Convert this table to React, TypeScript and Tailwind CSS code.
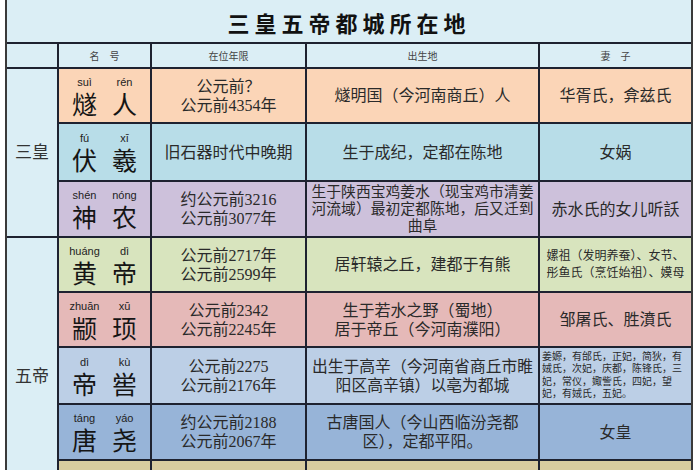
import React from 'react';

type Row = {
  bg: string;
  name: [string, string][];
  dates: string[];
  birth: string[];
  birthSize: string;
  wife: string[];
  wifeSize: string;
  wifeAlign?: string;
};

const rows: Row[] = [
  {
    bg: 'bg-[#fbd5b7]',
    name: [['suì', '燧'], ['rén', '人']],
    dates: ['公元前？', '公元前4354年'],
    birth: ['燧明国（今河南商丘）人'],
    birthSize: 'text-[16px] leading-[19px]',
    wife: ['华胥氏，弇兹氏'],
    wifeSize: 'text-[16px] leading-[19px]',
  },
  {
    bg: 'bg-[#b8dde8]',
    name: [['fú', '伏'], ['xī', '羲']],
    dates: ['旧石器时代中晚期'],
    birth: ['生于成纪，定都在陈地'],
    birthSize: 'text-[16px] leading-[19px]',
    wife: ['女娲'],
    wifeSize: 'text-[16px] leading-[19px]',
  },
  {
    bg: 'bg-[#cdc1db]',
    name: [['shén', '神'], ['nóng', '农']],
    dates: ['约公元前3216', '公元前3077年'],
    birth: ['生于陕西宝鸡姜水（现宝鸡市清姜', '河流域）最初定都陈地，后又迁到', '曲阜'],
    birthSize: 'text-[14.8px] leading-[17px]',
    wife: ['赤水氏的女儿听訞'],
    wifeSize: 'text-[16px] leading-[19px]',
  },
  {
    bg: 'bg-[#d8e4be]',
    name: [['huáng', '黄'], ['dì', '帝']],
    dates: ['公元前2717年', '公元前2599年'],
    birth: ['居轩辕之丘，建都于有熊'],
    birthSize: 'text-[16px] leading-[19px]',
    wife: ['嫘祖（发明养蚕）、女节、', '彤鱼氏（烹饪始祖）、嫫母'],
    wifeSize: 'text-[12px] leading-[17px]',
  },
  {
    bg: 'bg-[#e5b9b8]',
    name: [['zhuān', '颛'], ['xū', '顼']],
    dates: ['公元前2342', '公元前2245年'],
    birth: ['生于若水之野（蜀地）', '居于帝丘（今河南濮阳）'],
    birthSize: 'text-[16px] leading-[19px]',
    wife: ['邹屠氏、胜濆氏'],
    wifeSize: 'text-[16px] leading-[19px]',
  },
  {
    bg: 'bg-[#bccfe6]',
    name: [['dì', '帝'], ['kù', '喾']],
    dates: ['公元前2275', '公元前2176年'],
    birth: ['出生于高辛（今河南省商丘市睢', '阳区高辛镇）以亳为都城'],
    birthSize: 'text-[15.8px] leading-[19px]',
    wife: ['姜嫄，有邰氏，正妃，简狄，有', '娀氏，次妃，庆都，陈锋氏，三', '妃，常仪，娵訾氏，四妃，望', '妃，有娀氏，五妃。'],
    wifeSize: 'text-[10px] leading-[12.5px]',
    wifeAlign: 'text-left pl-[2px]',
  },
  {
    bg: 'bg-[#97b4d8]',
    name: [['táng', '唐'], ['yáo', '尧']],
    dates: ['约公元前2188', '公元前2067年'],
    birth: ['古唐国人（今山西临汾尧都', '区），定都平阳。'],
    birthSize: 'text-[16px] leading-[19px]',
    wife: ['女皇'],
    wifeSize: 'text-[16px] leading-[19px]',
  },
  {
    bg: 'bg-[#d8cc9f]',
    name: [['yú', '虞'], ['shùn', '舜']],
    dates: ['公元前2277', '公元前2178年'],
    birth: ['生于姚墟'],
    birthSize: 'text-[16px] leading-[19px]',
    wife: ['娥皇、女英'],
    wifeSize: 'text-[16px] leading-[19px]',
  },
];

const cellText = 'text-[#2a2a2a] [font-family:"Liberation_Serif","Noto_Sans_CJK_SC",serif]';

function NameCell({ name, bg }: { name: [string, string][]; bg: string }) {
  return (
    <div className={`${bg} flex justify-center items-center`}>
      {name.map(([py, ch]) => (
        <div key={ch} className="w-[40px] flex flex-col items-center">
          <span className="text-[11px] leading-[13px] text-[#222] [font-family:'Liberation_Sans',sans-serif]">
            {py}
          </span>
          <span className="mt-[1px] text-[25px] leading-[26px] text-[#151515] [font-family:'Noto_Sans_CJK_SC',sans-serif]">
            {ch}
          </span>
        </div>
      ))}
    </div>
  );
}

export default function App() {
  return (
    <div className="w-[700px] h-[470px] overflow-hidden bg-white pl-[5px]">
      <div className="w-[688px] grid grid-cols-[50px_91px_153px_231px_151px] grid-rows-[42px_23px_53px_56px_54px_53px_53px_55px_54px_55px] gap-[2px] bg-[#1e2230] border-x-2 border-[#3a3a3a]">
        {/* title */}
        <div className="col-span-5 bg-[#dbeef5] flex items-center justify-center pt-[2px]">
          <span className="text-[22px] font-bold tracking-[5px] text-[#111] [font-family:'Noto_Sans_CJK_SC',sans-serif]">
            三皇五帝都城所在地
          </span>
        </div>

        {/* header */}
        <div className="bg-[#dbeef5]" />
        {['名　号', '在位年限', '出生地', '妻　子'].map((h) => (
          <div
            key={h}
            className="bg-[#dbeef5] flex items-center justify-center text-[10px] text-[#444] [font-family:'Noto_Sans_CJK_SC',sans-serif]"
          >
            {h}
          </div>
        ))}

        {rows.map((r, i) => (
          <React.Fragment key={i}>
            {i === 0 && (
              <div className="row-span-3 bg-[#dbeef5] flex items-center justify-center pb-[4px] text-[17px] text-[#333] [font-family:'Noto_Sans_CJK_SC',sans-serif]">
                三皇
              </div>
            )}
            {i === 3 && (
              <div className="row-span-5 bg-[#dbeef5] flex items-center justify-center pb-[4px] text-[17px] text-[#333] [font-family:'Noto_Sans_CJK_SC',sans-serif]">
                五帝
              </div>
            )}
            <NameCell name={r.name} bg={r.bg} />
            <div className={`${r.bg} flex flex-col items-center justify-center text-[16px] leading-[19px] ${cellText}`}>
              {r.dates.map((d) => (
                <span key={d}>{d}</span>
              ))}
            </div>
            <div className={`${r.bg} flex flex-col items-center justify-center text-center ${r.birthSize} ${cellText}`}>
              {r.birth.map((b) => (
                <span key={b}>{b}</span>
              ))}
            </div>
            <div
              className={`${r.bg} flex flex-col justify-center ${r.wifeAlign ?? 'items-center text-center'} ${r.wifeSize} ${cellText}`}
            >
              {r.wife.map((w) => (
                <span key={w}>{w}</span>
              ))}
            </div>
          </React.Fragment>
        ))}
      </div>
    </div>
  );
}
